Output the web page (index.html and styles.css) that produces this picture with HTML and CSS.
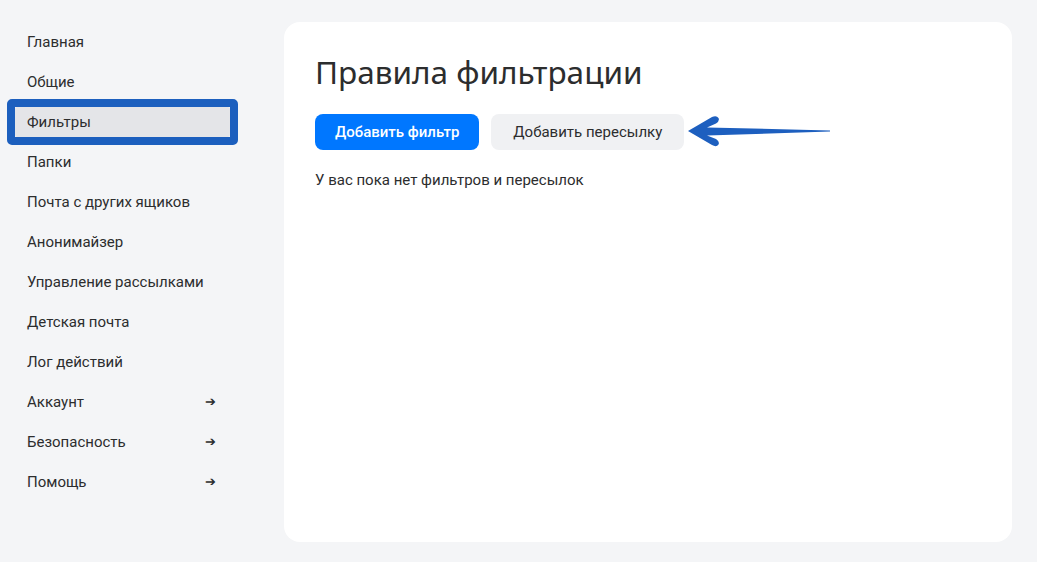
FILE: index.html
```html
<!DOCTYPE html>
<html lang="ru">
<head>
<meta charset="utf-8">
<title>Правила фильтрации</title>
<link rel="stylesheet" href="styles.css">
</head>
<body>
<div class="page">
  <nav class="sidebar">
    <a class="item">Главная</a>
    <a class="item">Общие</a>
    <a class="item active">Фильтры</a>
    <a class="item">Папки</a>
    <a class="item">Почта с других ящиков</a>
    <a class="item">Анонимайзер</a>
    <a class="item">Управление рассылками</a>
    <a class="item">Детская почта</a>
    <a class="item">Лог действий</a>
    <a class="item">Аккаунт <span class="go">➔</span></a>
    <a class="item">Безопасность <span class="go">➔</span></a>
    <a class="item">Помощь <span class="go">➔</span></a>
  </nav>
  <main class="card">
    <h1 class="title">Правила фильтрации</h1>
    <div class="actions">
      <button class="btn primary">Добавить фильтр</button>
      <button class="btn secondary">Добавить пересылку</button>
      <svg class="pointer" width="146" height="36" viewBox="0 0 146 36">
        <path d="M2 17 L26 3 Q30.5 1 32.5 4 Q34 7 30 9.5 L21 13.5 L144 16.4 L144 17.6 L21 21.5 L30 25 Q34 27.5 32.5 30.5 Q30.5 33.5 26 31 Z" fill="#1d5fbf"/>
      </svg>
    </div>
    <p class="empty">У вас пока нет фильтров и пересылок</p>
  </main>
</div>
</body>
</html>
```
FILE: styles.css
```css
* { box-sizing: border-box; }
html, body { margin: 0; height: 100%; }
body {
  background: #f4f5f7;
  font-family: Roboto, "Noto Sans", Arial, sans-serif;
  color: #2c2d2e;
}
.page {
  display: flex;
  height: 562px;
  padding: 22px 25px 20px 0;
}
.sidebar {
  width: 284px;
  flex: none;
  display: flex;
  flex-direction: column;
  gap: 10px;
  padding: 5px 0 0 15px;
}
.item {
  position: relative;
  display: flex;
  align-items: center;
  justify-content: space-between;
  width: 215px;
  height: 30px;
  padding: 0 14px 0 12px;
  font-size: 15px;
  line-height: 20px;
  color: #2c2d2e;
  border-radius: 2px;
}
.item.active { background: #e4e5e8; }
.item.active::before {
  content: "";
  position: absolute;
  inset: -8px;
  border: 8px solid #1c5fbe;
  border-radius: 5px;
}
.go { font-size: 13px; color: #2c2d2e; }
.card {
  flex: 1;
  background: #fff;
  border-radius: 16px;
  padding: 28px 31px;
}
.title {
  margin: 0;
  font-family: "Noto Sans", Roboto, sans-serif;
  font-weight: 400;
  font-size: 31.5px;
  line-height: 44px;
  color: #2c2d2e;
}
.actions {
  position: relative;
  display: flex;
  gap: 12px;
  margin-top: 20px;
}
.btn {
  height: 36px;
  border: none;
  border-radius: 8px;
  padding: 0 20px;
  font-family: Roboto, "Noto Sans", sans-serif;
  font-size: 15px;
}
.primary { background: #0077ff; color: #fff; font-weight: 500; }
.secondary { background: #f0f1f3; color: #2c2d2e; padding: 0 22px; }
.pointer {
  position: absolute;
  left: 371px;
  top: 0;
}
.empty {
  margin: 20px 0 0;
  font-size: 15px;
  line-height: 20px;
}
```
